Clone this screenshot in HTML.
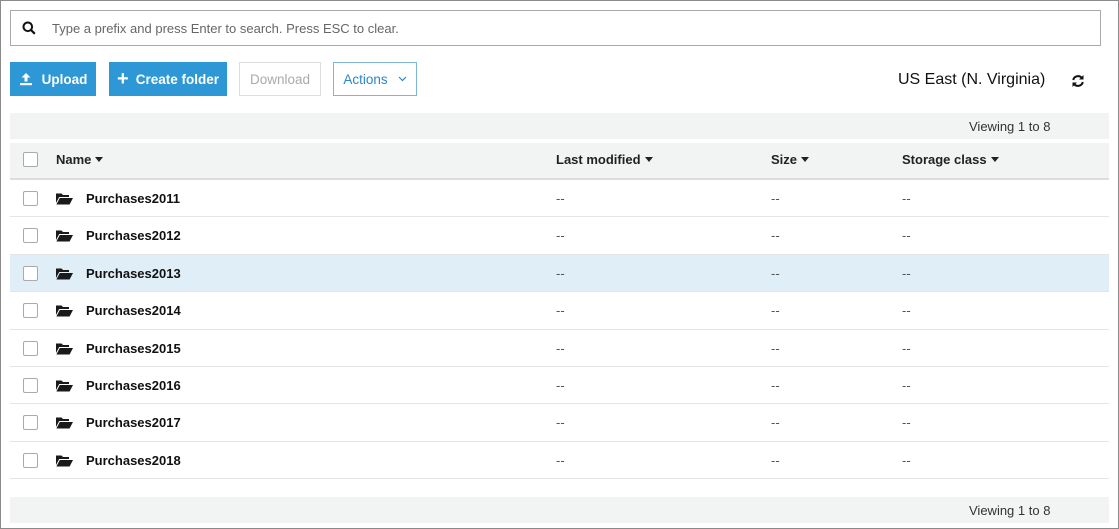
<!DOCTYPE html>
<html><head><style>
*{box-sizing:border-box;margin:0;padding:0}
body{width:1119px;height:529px;background:#fff;font-family:"Liberation Sans",Arial,sans-serif;position:relative;overflow:hidden;color:#222}
.frame{position:absolute;left:0;top:0;width:1119px;height:529px;border:1px solid #8a8a8a;pointer-events:none}
.abs{position:absolute}
.search{left:10px;top:10px;width:1091px;height:36px;border:1px solid #a9a9a9;background:#fff}
.search span{position:absolute;left:41px;top:10px;font-size:13px;color:#666}
.btn{position:absolute;top:62px;height:34px;font-size:13.5px;font-weight:bold;display:flex;align-items:center;justify-content:center}
.blue{background:#2e98d6;color:#fff}
.bar{left:10px;width:1099px;background:#f2f3f3}
.cb{position:absolute;left:23px;width:15px;height:15px;border:1px solid #aaa;background:#fff;border-radius:2px}
.row{position:absolute;left:10px;width:1099px;height:38px;border-bottom:1px solid #e5e5e5;font-size:13px}
.row .n{position:absolute;left:76px;top:11px;font-weight:bold;color:#111}
.row .d{position:absolute;top:11px;color:#555}
.hdr{font-size:13px;font-weight:bold;position:absolute;top:152px;color:#222}
.tri{display:inline-block;border-left:4px solid transparent;border-right:4px solid transparent;border-top:5px solid #222;margin-left:4px;vertical-align:2px}
.view{position:absolute;font-size:13px;color:#333}
</style></head><body>
<div class="abs search">
<svg class="abs" style="left:11px;top:10px" width="14" height="14" viewBox="0 0 14 14"><circle cx="5.8" cy="5.8" r="4.3" fill="none" stroke="#111" stroke-width="2"/><path d="M9 9l3.8 3.8" stroke="#111" stroke-width="2.2"/></svg>
<span>Type a prefix and press Enter to search. Press ESC to clear.</span></div>
<div class="btn blue" style="left:10px;width:86px">
<svg width="14" height="14" viewBox="0 0 14 14" style="margin-right:9px"><path d="M7 1l-4.5 4.5h3v4h3v-4h3z" fill="#fff"/><rect x="1" y="11" width="12" height="2.2" fill="#fff"/></svg>Upload</div>
<div class="btn blue" style="left:109px;width:118px"><span style="font-size:20px;margin-right:7px;font-weight:bold;line-height:1">+</span>Create folder</div>
<div class="btn" style="left:239px;width:82px;border:1px solid #ddd;color:#aaa;font-weight:normal">Download</div>
<div class="btn" style="left:333px;width:84px;border:1px solid #7fb6e0;color:#2b86c9;font-weight:normal">Actions<svg width="9" height="6" viewBox="0 0 9 6" style="margin-left:10px"><path d="M1 1l3.5 3.5L8 1" fill="none" stroke="#2b86c9" stroke-width="1.2"/></svg></div>
<div class="abs" style="left:898px;top:71px;font-size:16px;color:#111">US East (N. Virginia)</div>
<svg class="abs" style="left:1071px;top:74px" width="14" height="14" viewBox="0 0 14 14"><path d="M2.2 6A5 5 0 0 1 11 4" fill="none" stroke="#111" stroke-width="2"/><path d="M12.5 1v4.5H8z" fill="#111"/><path d="M11.8 8A5 5 0 0 1 3 10" fill="none" stroke="#111" stroke-width="2"/><path d="M1.5 13V8.5H6z" fill="#111"/></svg>
<div class="abs bar" style="top:113px;height:26px"></div>
<div class="view" style="left:969px;top:119px">Viewing 1 to 8</div>
<div class="abs bar" style="top:143px;height:37px;border-bottom:2px solid #ddd"></div>
<div class="cb" style="top:152px"></div>
<div class="hdr" style="left:56px">Name<span class="tri"></span></div>
<div class="hdr" style="left:556px">Last modified<span class="tri"></span></div>
<div class="hdr" style="left:771px">Size<span class="tri"></span></div>
<div class="hdr" style="left:902px">Storage class<span class="tri"></span></div>
<div id="rows"></div>
<div class="abs bar" style="top:497px;height:26px"></div>
<div class="view" style="left:969px;top:503px">Viewing 1 to 8</div>
<div class="frame"></div>
<script>
var h='';var tops=[180,217,255,292,330,367,404,442];
for(var i=0;i<8;i++){var t=tops[i];h+='<div class="row" style="top:'+t+'px;height:'+((i<7?tops[i+1]:479)-t)+'px;'+(i==2?'background:#dfeef7;':'')+'"><div class="cb" style="left:13px;top:11px"></div><svg class="abs" style="left:46px;top:12px" width="17" height="13" viewBox="0 0 17 13"><path d="M0 1.5h5.5l1.5 1.5h6v2H3.2L0 11z" fill="#1a1a1a"/><path d="M3.8 6H17l-3.4 6.5H0.4z" fill="#1a1a1a"/></svg><div class="n">Purchases'+(2011+i)+'</div><div class="d" style="left:546px">--</div><div class="d" style="left:761px">--</div><div class="d" style="left:892px">--</div></div>';}
document.getElementById('rows').innerHTML=h;
</script>
</body></html>
